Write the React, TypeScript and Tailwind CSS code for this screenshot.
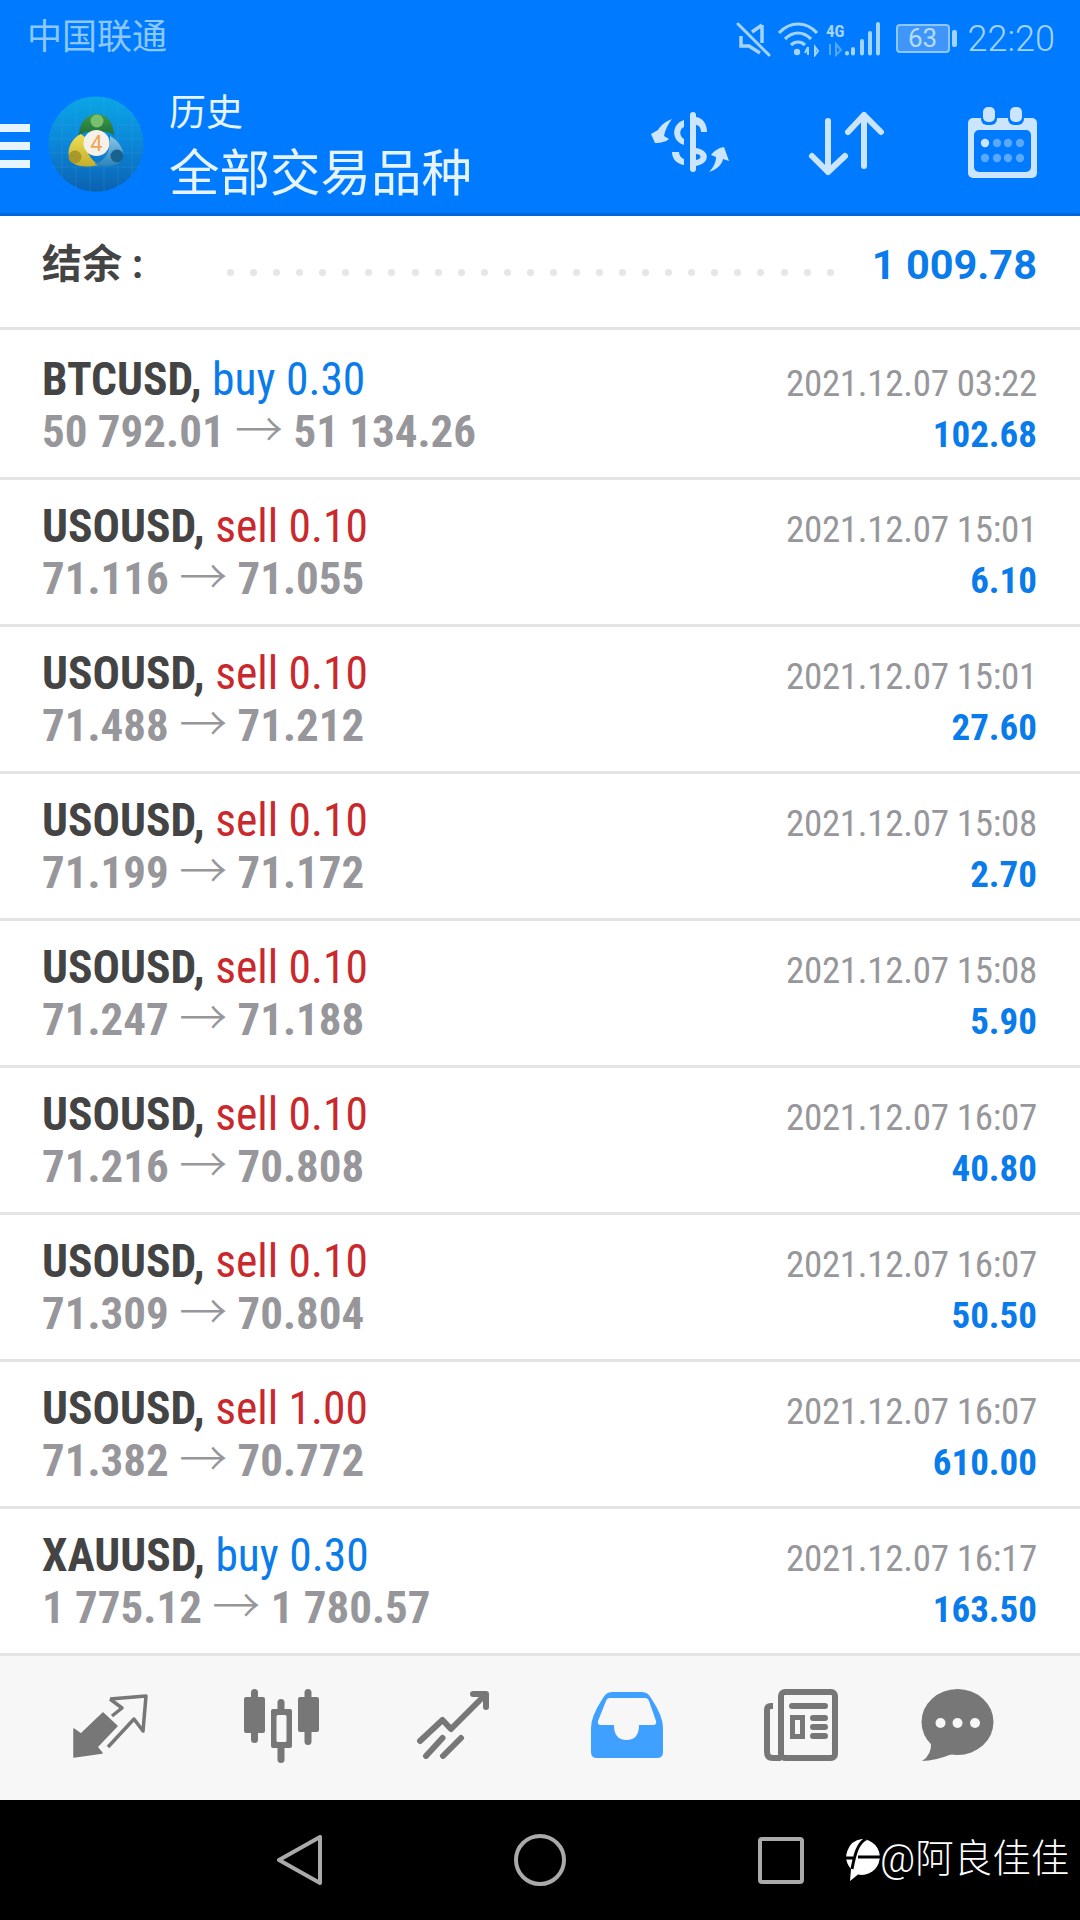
import React from 'react';

type Trade = {
  symbol: string;
  side: 'buy' | 'sell';
  lots: string;
  open: string;
  close: string;
  time: string;
  profit: string;
};

const trades: Trade[] = [
  { symbol: 'BTCUSD', side: 'buy', lots: '0.30', open: '50 792.01', close: '51 134.26', time: '2021.12.07 03:22', profit: '102.68' },
  { symbol: 'USOUSD', side: 'sell', lots: '0.10', open: '71.116', close: '71.055', time: '2021.12.07 15:01', profit: '6.10' },
  { symbol: 'USOUSD', side: 'sell', lots: '0.10', open: '71.488', close: '71.212', time: '2021.12.07 15:01', profit: '27.60' },
  { symbol: 'USOUSD', side: 'sell', lots: '0.10', open: '71.199', close: '71.172', time: '2021.12.07 15:08', profit: '2.70' },
  { symbol: 'USOUSD', side: 'sell', lots: '0.10', open: '71.247', close: '71.188', time: '2021.12.07 15:08', profit: '5.90' },
  { symbol: 'USOUSD', side: 'sell', lots: '0.10', open: '71.216', close: '70.808', time: '2021.12.07 16:07', profit: '40.80' },
  { symbol: 'USOUSD', side: 'sell', lots: '0.10', open: '71.309', close: '70.804', time: '2021.12.07 16:07', profit: '50.50' },
  { symbol: 'USOUSD', side: 'sell', lots: '1.00', open: '71.382', close: '70.772', time: '2021.12.07 16:07', profit: '610.00' },
  { symbol: 'XAUUSD', side: 'buy', lots: '0.30', open: '1 775.12', close: '1 780.57', time: '2021.12.07 16:17', profit: '163.50' },
];

function Logo() {
  return (
    <svg width="96" height="96" viewBox="48 96 96 96">
      <defs>
        <linearGradient id="disc" x1="0" y1="0" x2="0" y2="1">
          <stop offset="0" stopColor="#0aa6e6" />
          <stop offset="0.5" stopColor="#0c86d8" />
          <stop offset="1" stopColor="#0b62b0" />
        </linearGradient>
        <linearGradient id="green" x1="0" y1="0" x2="0" y2="1">
          <stop offset="0" stopColor="#3f9a48" />
          <stop offset="1" stopColor="#1f6f38" />
        </linearGradient>
        <linearGradient id="yellow" x1="0" y1="0" x2="0" y2="1">
          <stop offset="0" stopColor="#efdf56" />
          <stop offset="1" stopColor="#c4ae2a" />
        </linearGradient>
        <linearGradient id="blue" x1="0" y1="0" x2="0" y2="1">
          <stop offset="0" stopColor="#8cc6e8" />
          <stop offset="1" stopColor="#2b83bb" />
        </linearGradient>
      </defs>
      <circle cx="96" cy="144" r="47.5" fill="url(#disc)" />
      <path d="M62 110V178M76 99V189M90 97V191M104 97V191M118 101V187M132 112V176M52 125H140M49 139H143M49 153H143M52 167H140" stroke="#4fb0ea" strokeWidth="0.6" opacity="0.35" />
      <path d="M97 114C108 114 114 124 114 136C110 131 104 131 97 133C90 131 84 131 79 136C79 124 86 114 97 114Z" fill="url(#green)" />
      <circle cx="97" cy="121" r="6.5" fill="#79bf70" />
      <path d="M81 134C72 138 67 148 69 157C71 167 86 168 99 165C90 160 85 150 86 138Z" fill="url(#yellow)" />
      <circle cx="75" cy="157" r="6.5" fill="#a8982a" />
      <path d="M110 136C120 141 125 152 123 158C118 167 106 168 94 164C104 162 111 153 110 136Z" fill="url(#blue)" />
      <circle cx="117" cy="156" r="6.5" fill="#17628f" />
      <circle cx="96.5" cy="143" r="13" fill="#f6f1e8" />
      <text x="96.5" y="151" textAnchor="middle" fontFamily="Roboto, sans-serif" fontSize="22" fill="#eda55a">4</text>
    </svg>
  );
}

function StatusIcons() {
  const c = '#a3d3ff';
  return (
    <svg width="148" height="36" viewBox="736 18 148 36" fill="none">
      {/* mute */}
      <path d="M738 21L769 52" stroke={c} strokeWidth="3" strokeLinecap="round" />
      <path d="M762 22V40M762 22L752 29M741 33V43H749L760 50" stroke={c} strokeWidth="3.5" />
      {/* wifi */}
      <path d="M779 30C790 18 806 18 817 30M785 36C793 28 803 28 811 36M791 42C795 38 801 38 805 42" stroke={c} strokeWidth="3.2" />
      <circle cx="797" cy="49" r="3.2" fill={c} />
      <path d="M808 44V52M805 50L808 44M815 44V52L818 48Z" stroke={c} strokeWidth="2" />
      {/* 4G above the signal bars */}
      <text x="826" y="34" fontFamily="Roboto, sans-serif" fontSize="17" fontWeight="700" fill={c} style={{ fontStretch: 'condensed' }}>4G</text>
      <path d="M830 41V52M836 41V52L841 47Z" stroke={c} strokeWidth="2" opacity="0.5" />
      <rect x="845" y="48" width="4" height="4.5" rx="2" fill={c} />
      <rect x="851" y="44" width="4" height="8.5" rx="2" fill={c} />
      <rect x="860" y="36" width="4" height="16.5" rx="2" fill={c} />
      <rect x="868" y="28" width="4" height="24.5" rx="2" fill={c} />
      <rect x="876" y="19" width="4" height="33.5" rx="2" fill={c} />
    </svg>
  );
}

function DollarIcon() {
  return (
    <svg width="80" height="62" viewBox="650 111 80 62" fill="#cce5ff">
      <rect x="690" y="112" width="6" height="60" rx="3" />
      <path d="M696 117C703 118 707 124 707 132L701 132C701 128 699 125 696 125Z" />
      <path d="M684 120C671 124 671 141 684 145L684 139C679 136 679 129 684 127Z" />
      <path d="M672 152L679 152C679 155 681 158 684 159L684 165C677 164 672 159 672 152Z" />
      <path d="M696 148C710 150 711 163 696 166L696 160C702 159 702 154 696 154Z" />
      <path d="M672 119C666 121 660 126 658 130L651 134L655 143C662 143 667 141 669 139L664 136C665 130 668 124 672 119Z" />
      <path d="M709 172C716 170 722 165 723 159L729 161L724 147C718 148 714 151 711 155L716 157C716 163 713 168 709 172Z" />
    </svg>
  );
}

function SortIcon() {
  return (
    <svg width="78" height="66" viewBox="807 111 78 66" fill="none" stroke="#cce5ff" strokeWidth="6" strokeLinecap="round" strokeLinejoin="round">
      <path d="M828 121V172M812 156L828 172L845 156" />
      <path d="M864 166V115M848 132L864 115L881 132" />
    </svg>
  );
}

function CalendarIcon() {
  const dots = [985, 997, 1008, 1020];
  return (
    <svg width="70" height="72" viewBox="968 107 70 72">
      <rect x="968" y="118" width="69" height="60" rx="5" fill="#cce5ff" />
      <rect x="974" y="130" width="57" height="42" rx="5" fill="#007aff" />
      <rect x="981" y="105" width="16" height="20" rx="6" fill="#007aff" />
      <rect x="1008" y="105" width="16" height="20" rx="6" fill="#007aff" />
      <rect x="983" y="107" width="12" height="15" rx="5" fill="#cce5ff" />
      <rect x="1010" y="107" width="12" height="15" rx="5" fill="#cce5ff" />
      {dots.map((x, i) => (
        <circle key={x} cx={x} cy="143" r="4.2" fill={i === 0 ? '#cce5ff' : '#5aa8ff'} />
      ))}
      {dots.map((x) => (
        <circle key={x} cx={x} cy="158" r="4.2" fill="#5aa8ff" />
      ))}
    </svg>
  );
}

function TradeIcon() {
  return (
    <svg width="76" height="66" viewBox="72 1693 76 66">
      <path d="M74 1729L74 1757L102 1753L97 1747L117 1726L103 1713L81 1734Z" fill="#777" stroke="#777" strokeWidth="1.5" strokeLinejoin="round" />
      <path d="M110 1699L146 1696L143 1731L134 1719L108 1747M110 1699L122 1708L112 1716" fill="none" stroke="#777" strokeWidth="3.5" strokeLinejoin="round" />
    </svg>
  );
}

function CandleIcon() {
  return (
    <svg width="78" height="78" viewBox="243 1687 78 78" fill="#777">
      <rect x="251" y="1689" width="7" height="54" rx="3.5" />
      <rect x="244" y="1697" width="21" height="36" rx="2" />
      <rect x="277.5" y="1699" width="7" height="64" rx="3.5" />
      <rect x="271" y="1709" width="21" height="39" rx="2" />
      <rect x="276.5" y="1715" width="10" height="27" rx="1.5" fill="#f7f7f7" />
      <rect x="304.5" y="1689" width="7" height="56" rx="3.5" />
      <rect x="298" y="1697" width="21" height="35" rx="2" />
    </svg>
  );
}

function ChartIcon() {
  return (
    <svg width="72" height="68" viewBox="417 1691 72 68" fill="none" stroke="#777" strokeWidth="6" strokeLinecap="round" strokeLinejoin="round">
      <path d="M420 1741L442.5 1720L451 1729L485 1695M473 1694H486V1707" />
      <path d="M426 1756L442.5 1738M443 1756L461 1738" />
    </svg>
  );
}

function InboxIcon() {
  return (
    <svg width="72" height="66" viewBox="591 1692 72 66">
      <path d="M612 1692H642Q648 1692 651 1698Q663 1716 663 1728V1752Q663 1758 657 1758H597Q591 1758 591 1752V1728Q591 1716 603 1698Q606 1692 612 1692Z" fill="#40a0ff" />
      <path d="M610 1698H645Q648 1698 649 1701L656 1721Q657 1725 653 1725H639Q639 1740 626.5 1740Q614 1740 614 1725H601Q597 1725 598 1721L606 1701Q607 1698 610 1698Z" fill="#f7f7f7" />
    </svg>
  );
}

function NewsIcon() {
  return (
    <svg width="76" height="74" viewBox="763 1688 76 74" fill="none" stroke="#777" strokeWidth="6" strokeLinecap="round">
      <rect x="781" y="1692" width="54" height="66" rx="4" />
      <path d="M773 1706H771Q767 1706 767 1710V1752Q767 1758 773 1758H781" strokeLinecap="butt" />
      <path d="M792 1706H825M813 1718H825M813 1727H825M813 1736H825" />
      <rect x="792.5" y="1717.5" width="10" height="19" strokeWidth="5" />
    </svg>
  );
}

function ChatIcon() {
  return (
    <svg width="74" height="74" viewBox="921 1688 74 74" fill="#777">
      <ellipse cx="957.5" cy="1722" rx="36" ry="33" />
      <path d="M931 1742Q932 1755 922 1761Q935 1761 952 1754Z" />
      <circle cx="940.5" cy="1723" r="5" fill="#f7f7f7" />
      <circle cx="957.5" cy="1723" r="5" fill="#f7f7f7" />
      <circle cx="975" cy="1723" r="5" fill="#f7f7f7" />
    </svg>
  );
}

function TradeRow({ trade, first }: { trade: Trade; first?: boolean }) {
  const sideColor = trade.side === 'buy' ? 'text-[#0a7bea]' : 'text-[#c9282c]';
  return (
    <div className={`flex justify-between border-b-[3px] border-[#e4e4e4] pl-[42px] pr-[43px] ${first ? 'h-[150px] pt-[24px]' : 'h-[147px] pt-[21px]'}`}>
      <div className="flex flex-col">
        <div className="h-[51px] whitespace-pre text-[45.5px] leading-[52px] font-stretch-condensed">
          <span className="font-bold text-[#444444]">{trade.symbol}, </span>
          <span className={sideColor}>{trade.side} {trade.lots}</span>
        </div>
        <div className="h-[51px] whitespace-pre text-[45px] leading-[52px] font-bold font-stretch-condensed text-[#97979b]">
          {trade.open} <span className="text-[48px] font-light">→</span> {trade.close}
        </div>
      </div>
      <div className={`flex flex-col items-end ${first ? 'mt-[4px]' : 'mt-[3px]'}`}>
        <div className="h-[51px] text-[37px] leading-[52px] tracking-[-0.3px] font-stretch-condensed text-[#97979b]">{trade.time}</div>
        <div className="h-[51px] text-[37px] leading-[52px] font-bold font-stretch-condensed text-[#0a7bea]">{trade.profit}</div>
      </div>
    </div>
  );
}

export default function App() {
  return (
    <div className="flex h-[1920px] w-[1080px] flex-col overflow-hidden bg-white font-['Roboto','Noto_Sans_CJK_SC',sans-serif]">
      {/* Header */}
      <div className="h-[216px] border-b-[3px] border-[#0068d6] bg-[#007aff]">
        <div className="flex h-[77px] items-center pl-[27px] pr-[25px]">
          <span className="text-[35px] text-[#8cc8ff]">中国联通</span>
          <div className="ml-auto flex items-center">
            <StatusIcons />
            <div className="ml-[12px] flex h-[29px] w-[54px] items-center justify-center rounded-[4px] border-2 border-[#8cc8ff] bg-[#3f95f8] text-[26px] text-[#b5dcff]">63</div>
            <div className="ml-[2px] h-[17px] w-[5px] rounded-[2px] bg-[#a3d3ff]" />
            <span className="ml-[11px] text-[36px] font-light text-[#a3d3ff]">22:20</span>
          </div>
        </div>
        <div className="mt-[19px] flex h-[96px] items-start">
          <div className="mt-[28px] flex w-[30px] flex-col gap-[10px]">
            <div className="h-[8px] bg-[#e6f4ff]" />
            <div className="h-[8px] bg-[#e6f4ff]" />
            <div className="h-[8px] bg-[#e6f4ff]" />
          </div>
          <div className="ml-[18px]">
            <Logo />
          </div>
          <div className="-mt-[4px] ml-[25px] flex flex-col gap-[7px] text-[#e6f4ff]">
            <span className="text-[37px] leading-[44px]">历史</span>
            <span className="text-[50.5px] leading-[62px]">全部交易品种</span>
          </div>
          <div className="ml-auto mr-[42px] flex items-start">
            <div className="mt-[15px]"><DollarIcon /></div>
            <div className="ml-[77px] mt-[15px]"><SortIcon /></div>
            <div className="ml-[83px] mt-[11px]"><CalendarIcon /></div>
          </div>
        </div>
      </div>

      {/* Balance */}
      <div className="flex h-[114px] items-start border-b-[3px] border-[#e4e4e4] pl-[42px] pr-[43px] leading-[50px]">
        <span className="mt-[24px] w-[185px] whitespace-pre text-[40px] font-bold text-[#444444]">结余 :</span>
        <div className="mt-[53px] flex w-[607px] justify-between">
          {Array.from({ length: 27 }).map((_, i) => (
            <div key={i} className="h-[7px] w-[7px] rounded-full bg-[#e6e6e6]" />
          ))}
        </div>
        <span className="ml-auto mt-[24px] text-[41.5px] font-bold text-[#0a7bea]">1 009.78</span>
      </div>

      {/* Trades */}
      <div>
        {trades.map((trade, i) => (
          <TradeRow key={i} trade={trade} first={i === 0} />
        ))}
      </div>

      {/* Tab bar */}
      <div className="flex h-[144px] items-start bg-[#f7f7f7]">
        <div className="ml-[72px] mt-[37px]"><TradeIcon /></div>
        <div className="ml-[95px] mt-[31px]"><CandleIcon /></div>
        <div className="ml-[96px] mt-[35px]"><ChartIcon /></div>
        <div className="ml-[102px] mt-[36px]"><InboxIcon /></div>
        <div className="ml-[100px] mt-[32px]"><NewsIcon /></div>
        <div className="ml-[82px] mt-[32px]"><ChatIcon /></div>
      </div>

      {/* Nav bar */}
      <div className="flex h-[120px] items-center bg-black">
        <svg className="ml-[277px]" width="46" height="50" viewBox="277 1835 46 50" fill="none" stroke="#aaa" strokeWidth="4" strokeLinejoin="round">
          <path d="M279 1860L320 1837V1883Z" />
        </svg>
        <svg className="ml-[191px]" width="52" height="52" viewBox="514 1834 52 52" fill="none" stroke="#aaa" strokeWidth="4">
          <circle cx="540" cy="1860" r="24" />
        </svg>
        <svg className="ml-[192px]" width="46" height="47" viewBox="757 1836 46 47" fill="none" stroke="#aaa" strokeWidth="4">
          <rect x="759" y="1838" width="42" height="43" rx="2" />
        </svg>
        <svg className="ml-[39px]" width="38" height="44" viewBox="841 1841 38 44">
          <path d="M860 1842a18 18 0 1 1-4 35.6L848 1884l1-12a18 18 0 0 1 11-30z" fill="#fff" />
          <path d="M842 1861H851M856 1860H878M864 1842C856 1846 853 1856 850 1872" fill="none" stroke="#000" strokeWidth="3" />
        </svg>
        <span className="-ml-[1px] -translate-y-[1px] text-[38.5px] font-light text-white">@阿良佳佳</span>
      </div>
    </div>
  );
}
